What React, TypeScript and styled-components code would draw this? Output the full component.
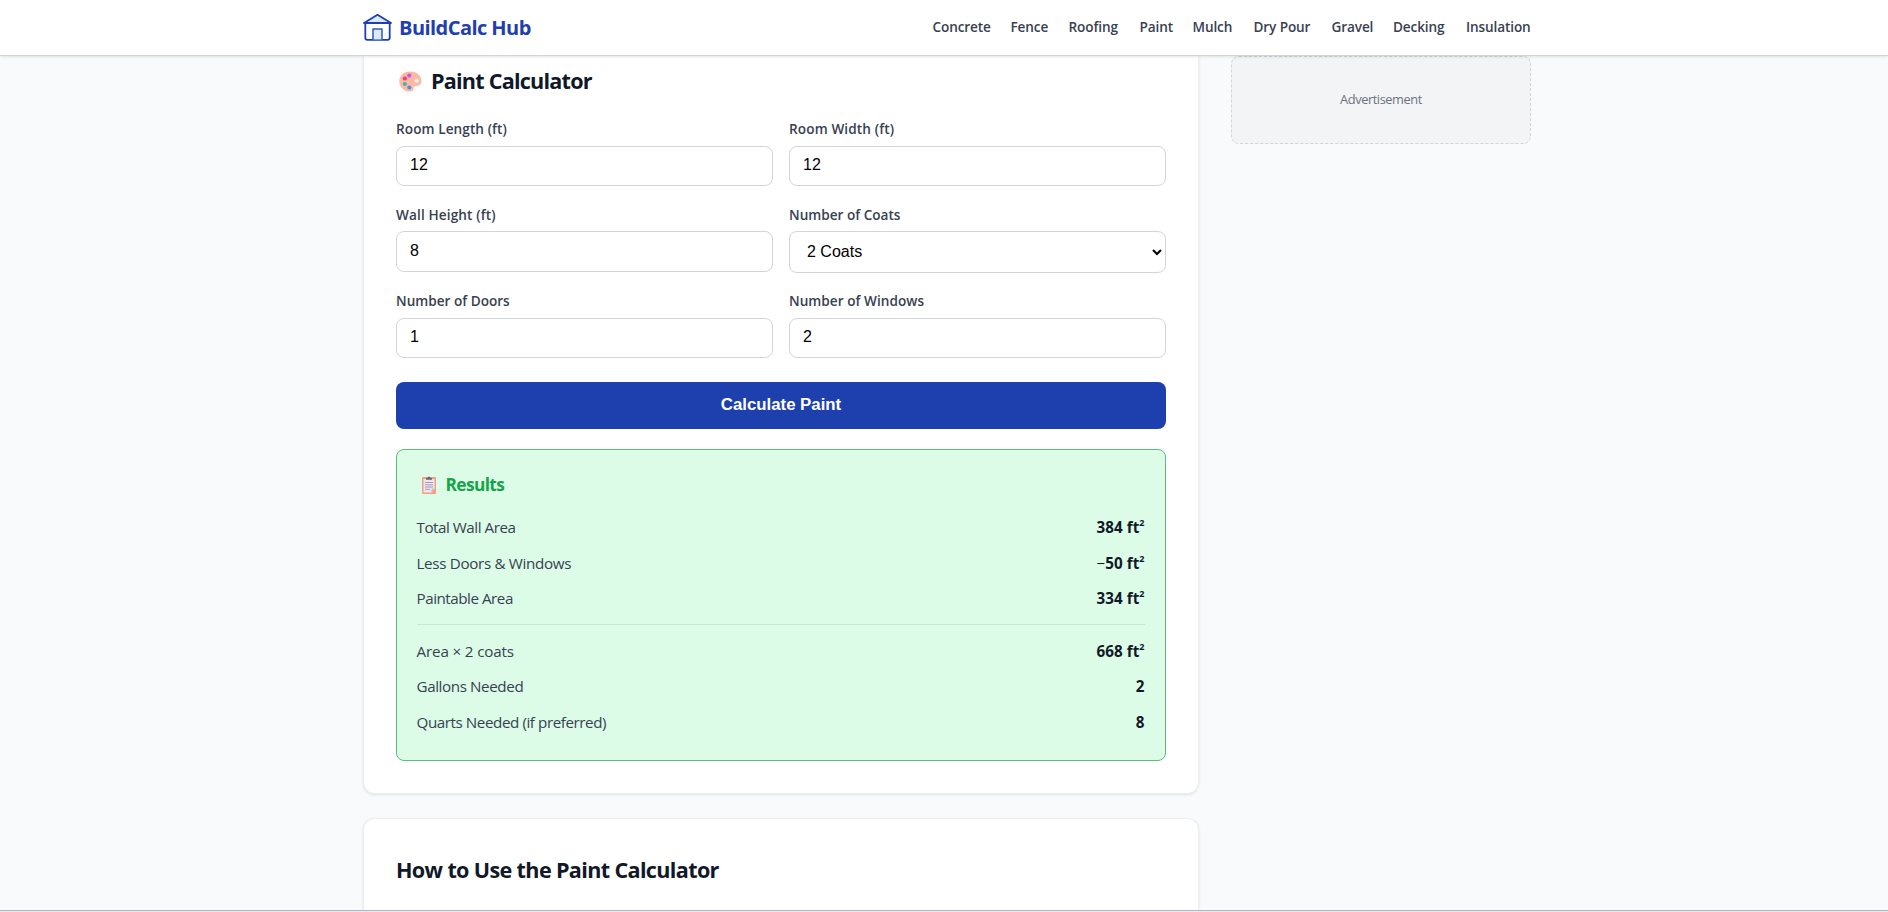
import React from 'react';
import styled, { createGlobalStyle, css } from 'styled-components';

const ui = `"Open Sans", "Noto Sans", sans-serif`;
const form = `"Liberation Sans", Arial, sans-serif`;

const GlobalStyle = createGlobalStyle`
  *, *::before, *::after { box-sizing: border-box; }
  html, body { margin: 0; padding: 0; height: 100%; overflow: hidden; }
  body { background: #f9fafb; font-family: ${ui}; color: #111827; }
`;

const Page = styled.div`
  height: 912px;
  display: flex;
  flex-direction: column;
  overflow: hidden;
  background: #f9fafc;
`;

const Header = styled.header`
  position: relative;
  z-index: 2;
  flex: none;
  height: 56px;
  background: #fff;
  border-bottom: 1px solid #d1d5db;
  box-shadow: 0 1px 3px rgba(0, 0, 0, 0.1);
`;

const HeaderInner = styled.div`
  width: 1168px;
  margin-left: 363px;
  height: 54px;
  display: flex;
  align-items: center;
  justify-content: space-between;
`;

const Logo = styled.a`
  display: flex;
  align-items: center;
  gap: 7px;
  color: #1e40af;
  font-size: 20px;
  font-weight: 700;
`;

const Fit = styled.span<{ $ls?: number }>`
  white-space: nowrap;
  letter-spacing: ${(p) => p.$ls ?? 0}px;
`;

const Nav = styled.nav`
  display: flex;
  gap: 20px;
  padding-bottom: 1px;
`;

const NavLink = styled.a<{ $w: number }>`
  width: ${(p) => p.$w}px;
  white-space: nowrap;
  font-size: 13.6px;
  font-weight: 600;
  letter-spacing: -0.12px;
  color: #374151;
`;

const Content = styled.div`
  flex: 1;
  min-height: 0;
  width: 1168px;
  margin-left: 363px;
  display: grid;
  grid-template-columns: 1fr 300px;
  gap: 32px;
  align-items: start;
`;

const Main = styled.main`
  display: flex;
  flex-direction: column;
  gap: 24px;
`;

const Card = styled.section<{ $first?: boolean }>`
  background: #fff;
  border: 1px solid #eceef1;
  border-radius: 12px;
  box-shadow: 0 1px 3px rgba(0, 0, 0, 0.1);
  padding: 32px;
  ${(p) =>
    p.$first &&
    css`
      padding-top: 0;
      border-top: 0;
      border-radius: 0 0 12px 12px;
    `}
`;

const Title = styled.h2`
  margin: 0;
  height: 30px;
  line-height: 30px;
  font-size: 21.6px;
  font-weight: 700;
  display: flex;
  align-items: center;
`;

const CardTitle = styled(Title)`
  margin-top: 10px;
  gap: 9px;
  svg { margin-left: 3px; }
`;

const GuideTitle = styled(Title)`
  margin-top: 4px;
  height: 80px;
  align-items: flex-start;
`;

const Fields = styled.div`
  margin-top: 23px;
  display: grid;
  grid-template-columns: 1fr 1fr;
  grid-template-rows: 67px 68px 67px;
  column-gap: 16px;
  row-gap: 18.5px;
`;

const Field = styled.label`
  display: flex;
  flex-direction: column;
  align-items: stretch;
`;

const Label = styled.span`
  height: 20px;
  margin-bottom: 6.5px;
  line-height: 20px;
  font-size: 13.6px;
  font-weight: 600;
  color: #374151;
`;

const control = css`
  width: 100%;
  border: 1px solid #d1d5db;
  border-radius: 8px;
  background: #fff;
  color: #000;
  font-family: ${form};
  font-size: 16px;
  outline: none;
`;

const Input = styled.input`
  ${control}
  height: 41px;
  padding: 0 13px 1px;
`;

const Select = styled.select`
  ${control}
  height: 42px;
  padding: 0 0 0 13px;
`;

const Button = styled.button`
  display: block;
  width: 100%;
  height: 47px;
  margin-top: 24px;
  padding: 0 0 2px;
  border: 0;
  border-radius: 8px;
  background: #1e40af;
  color: #fff;
  font-family: ${form};
  font-size: 16.8px;
  font-weight: 700;
`;

const Results = styled.div`
  margin-top: 20px;
  height: 312px;
  padding: 19px 20.5px 20px 19.5px;
  border: 1px solid #5abf78;
  border-radius: 8px;
  background: #dcfce7;
`;

const ResultsTitle = styled.h3`
  margin: 0 0 8.5px;
  height: 32px;
  line-height: 32px;
  display: flex;
  align-items: center;
  gap: 10px;
  padding-left: 5px;
  font-size: 17.3px;
  font-weight: 700;
  color: #16a34a;
`;

const Row = styled.div`
  height: 35.5px;
  display: flex;
  align-items: center;
  justify-content: space-between;
  font-size: 15.2px;
  color: #374151;
`;

const Value = styled.strong`
  font-weight: 700;
  color: #111827;
  letter-spacing: 0.05px;
  sup {
    font-size: 9px;
    line-height: 0;
    vertical-align: 7px;
  }
`;

const Minus = styled.span`
  font-weight: 400;
`;

const Divider = styled.hr`
  margin: 8px 0;
  border: 0;
  height: 1px;
  background: #c6e8d3;
`;

const Ad = styled.aside`
  height: 88px;
  padding-bottom: 2px;
  display: flex;
  align-items: center;
  justify-content: center;
  border: 1px dashed #d1d5db;
  border-radius: 8px;
  background: #f3f4f6;
  color: #6b7280;
  font-size: 12.8px;
`;

const Footer = styled.div`
  flex: none;
  height: 2px;
  background: #e8e9ee;
  border-top: 1px solid #b4b6bf;
`;

const HouseIcon = () => (
  <svg width="29" height="28" viewBox="0 0 29 28" fill="none" stroke="#1e40af" strokeWidth="1.8" strokeLinejoin="round" strokeLinecap="round">
    <path d="M1 10 14.500 1.800 28 10Z" fill="#dbeafe" />
    <path d="M2.300 10v14.800a2 2 0 0 0 2 2h20.400a2 2 0 0 0 2-2V10" />
    <path d="M10 26.500V16h9v10.500" fill="#dbeafe" stroke="#3358c4" strokeWidth="1.500" />
  </svg>
);

const PaletteIcon = () => (
  <svg width="23" height="21" viewBox="0 0 23 21">
    <path d="M11 .4C4.600.4.3 4.700.3 10.200c0 5.700 4.600 10.400 10.700 10.400 2.100 0 3.600-.8 3.300-2.500-.3-1.600.4-2.900 2.300-2.900 3.300 0 5.900-1.900 5.900-5.200C22.500 4.500 17.600.4 11 .4Z" fill="#ffb8a3" />
    <circle cx="17.700" cy="9.700" r="1.900" fill="#fff" />
    <circle cx="10.300" cy="4.600" r="2.100" fill="#c65be0" />
    <circle cx="5.900" cy="7.500" r="2.100" fill="#f03e7c" />
    <circle cx="5.900" cy="13" r="2.100" fill="#3fb5ad" />
    <circle cx="10.300" cy="16.500" r="2.100" fill="#4f8ee8" />
  </svg>
);

const ClipboardIcon = () => (
  <svg width="14" height="18" viewBox="0 0 14 18">
    <rect x="0" y="1" width="14" height="17" rx="1" fill="#f4a07c" />
    <path d="M1.500 3h11v9.500l-3 4h-8Z" fill="#ece6f4" />
    <path d="M12.500 12.500h-3v4Z" fill="#c9b9d8" />
    <path d="M4 3.800V2h1.500a1.500 1.500 0 0 1 3 0H10v1.800Z" fill="#6b6473" />
    <path d="M3 6.500h8M3 8.800h8M3 11h8M3 13.300h5" stroke="#9b93ac" strokeWidth=".9" />
  </svg>
);

const links: [string, number][] = [
  ['Concrete', 58], ['Fence', 38], ['Roofing', 51], ['Paint', 33], ['Mulch', 41],
  ['Dry Pour', 58], ['Gravel', 41.5], ['Decking', 53], ['Insulation', 65],
];

const Area = ({ n, negative }: { n: number; negative?: boolean }) => (
  <Value>{negative && <Minus>−</Minus>}{n} ft<sup>2</sup></Value>
);

export default function App() {
  return (
    <Page>
      <GlobalStyle />
      <Header>
        <HeaderInner>
          <Logo><HouseIcon /><Fit $ls={-0.55}>BuildCalc Hub</Fit></Logo>
          <Nav>{links.map(([name, w]) => <NavLink key={name} $w={w}>{name}</NavLink>)}</Nav>
        </HeaderInner>
      </Header>
      <Content>
        <Main>
          <Card $first>
            <CardTitle><PaletteIcon /><Fit $ls={-0.78}>Paint Calculator</Fit></CardTitle>
            <Fields>
              <Field><Label><Fit $ls={0.08}>Room Length (ft)</Fit></Label><Input defaultValue="12" /></Field>
              <Field><Label><Fit $ls={0.12}>Room Width (ft)</Fit></Label><Input defaultValue="12" /></Field>
              <Field><Label><Fit $ls={0.12}>Wall Height (ft)</Fit></Label><Input defaultValue="8" /></Field>
              <Field><Label><Fit>Number of Coats</Fit></Label><Select defaultValue="2"><option value="2">2 Coats</option></Select></Field>
              <Field><Label><Fit>Number of Doors</Fit></Label><Input defaultValue="1" /></Field>
              <Field><Label><Fit $ls={0.04}>Number of Windows</Fit></Label><Input defaultValue="2" /></Field>
            </Fields>
            <Button>Calculate Paint</Button>
            <Results>
              <ResultsTitle><ClipboardIcon /><Fit $ls={-0.6}>Results</Fit></ResultsTitle>
              <Row><Fit $ls={-0.47}>Total Wall Area</Fit><Area n={384} /></Row>
              <Row><Fit $ls={-0.33}>Less Doors &amp; Windows</Fit><Area n={50} negative /></Row>
              <Row><Fit $ls={-0.47}>Paintable Area</Fit><Area n={334} /></Row>
              <Divider />
              <Row><Fit $ls={-0.15}>Area × 2 coats</Fit><Area n={668} /></Row>
              <Row><Fit $ls={-0.4}>Gallons Needed</Fit><Value>2</Value></Row>
              <Row><Fit $ls={-0.43}>Quarts Needed (if preferred)</Fit><Value>8</Value></Row>
            </Results>
          </Card>
          <Card><GuideTitle><Fit $ls={-0.65}>How to Use the Paint Calculator</Fit></GuideTitle></Card>
        </Main>
        <Ad><Fit $ls={-0.42}>Advertisement</Fit></Ad>
      </Content>
      <Footer />
    </Page>
  );
}
